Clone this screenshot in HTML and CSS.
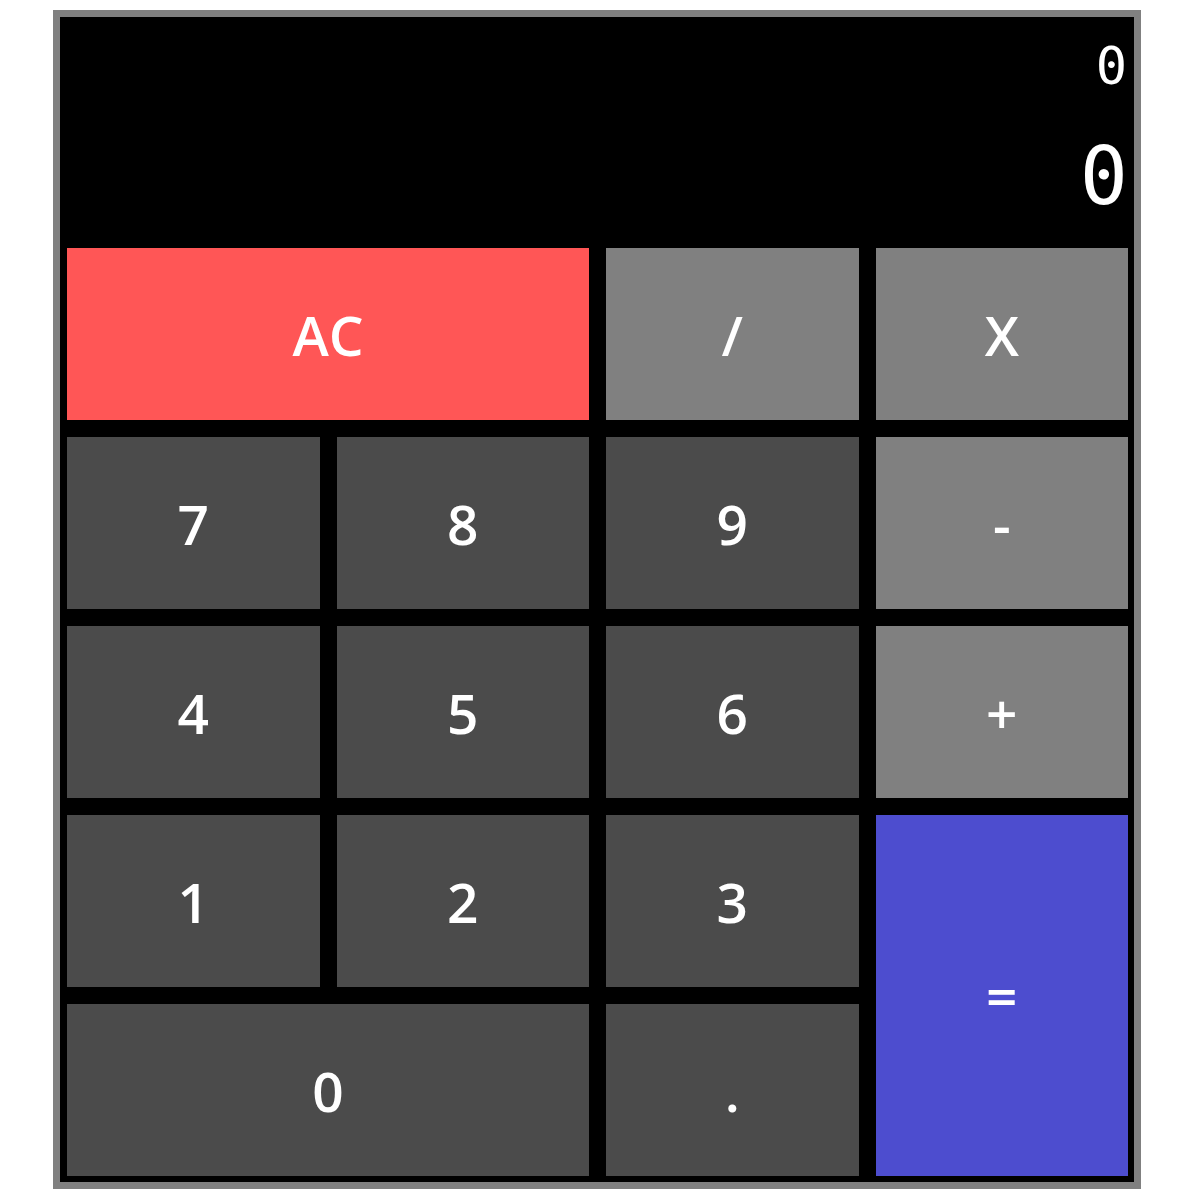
FILE: index.html
```html
<!DOCTYPE html>
<html lang="en">
<head>
<meta charset="UTF-8">
<meta name="viewport" content="width=device-width, initial-scale=1.0">
<title>Calculator</title>
<link rel="stylesheet" href="styles.css">
</head>
<body>

<div class="calculator">
  <div class="display">
    <div class="previous" id="previous">0</div>
    <div class="current" id="current">0</div>
  </div>

  <button class="key clear span-two" data-action="clear">AC</button>
  <button class="key operator" data-op="/">/</button>
  <button class="key operator" data-op="*">X</button>

  <button class="key">7</button>
  <button class="key">8</button>
  <button class="key">9</button>
  <button class="key operator" data-op="-">-</button>

  <button class="key">4</button>
  <button class="key">5</button>
  <button class="key">6</button>
  <button class="key operator" data-op="+">+</button>

  <button class="key">1</button>
  <button class="key">2</button>
  <button class="key">3</button>
  <button class="key equals" data-action="equals">=</button>

  <button class="key span-two">0</button>
  <button class="key">.</button>
</div>

<script src="script.js"></script>
</body>
</html>
```

FILE: styles.css
```css
* {
  box-sizing: border-box;
}
body {
  margin: 0;
  background: #fff;
}
.calculator {
  width: 1088px;
  margin: 10px 0 10px 53px;
  padding: 7px 6px 6px 7px;
  background: #000;
  border: 7px solid #808080;
  display: grid;
  grid-template-columns: repeat(4, 1fr);
  grid-template-rows: 207px;
  grid-auto-rows: 172px;
  gap: 17px;
}
.display {
  grid-column: span 4;
  display: flex;
  flex-direction: column;
  align-items: flex-end;
  padding: 12px 0 0 0;
  color: #fff;
  font-family: "DejaVu Sans Mono", monospace;
}
.previous {
  font-size: 52px;
  line-height: 60px;
  margin-right: 1px;
}
.current {
  font-size: 80px;
  line-height: 93px;
  margin-top: 34px;
}
.key {
  border: none;
  margin: 0;
  padding: 0;
  background-color: #4b4b4b;
  color: #fff;
  font-family: "Open Sans", "Noto Sans", sans-serif;
  font-weight: 600;
  font-size: 55px;
  cursor: pointer;
}
.span-two {
  grid-column: span 2;
}
.clear {
  background-color: #ff5656;
}
.operator {
  background-color: #808080;
}
.equals {
  grid-row: span 2;
  background-color: #4d4dcf;
}
```

FILE: script.js
```js
const previousEl = document.getElementById('previous');
const currentEl = document.getElementById('current');
let current = '0';
let previous = '0';
let op = null;

function render() {
  previousEl.textContent = previous;
  currentEl.textContent = current;
}

function compute(a, b, o) {
  a = parseFloat(a);
  b = parseFloat(b);
  if (o === '+') return a + b;
  if (o === '-') return a - b;
  if (o === '*') return a * b;
  if (o === '/') return b === 0 ? 0 : a / b;
  return b;
}

document.querySelectorAll('.key').forEach((key) => {
  key.addEventListener('click', () => {
    const action = key.dataset.action;
    const keyOp = key.dataset.op;

    if (action === 'clear') {
      current = '0';
      previous = '0';
      op = null;
    } else if (action === 'equals') {
      if (op) {
        current = String(compute(previous, current, op));
        previous = '0';
        op = null;
      }
    } else if (keyOp) {
      previous = op ? String(compute(previous, current, op)) : current;
      op = keyOp;
      current = '0';
    } else {
      const txt = key.textContent;
      if (txt === '.' && current.includes('.')) return;
      current = current === '0' && txt !== '.' ? txt : current + txt;
    }
    render();
  });
});
```
